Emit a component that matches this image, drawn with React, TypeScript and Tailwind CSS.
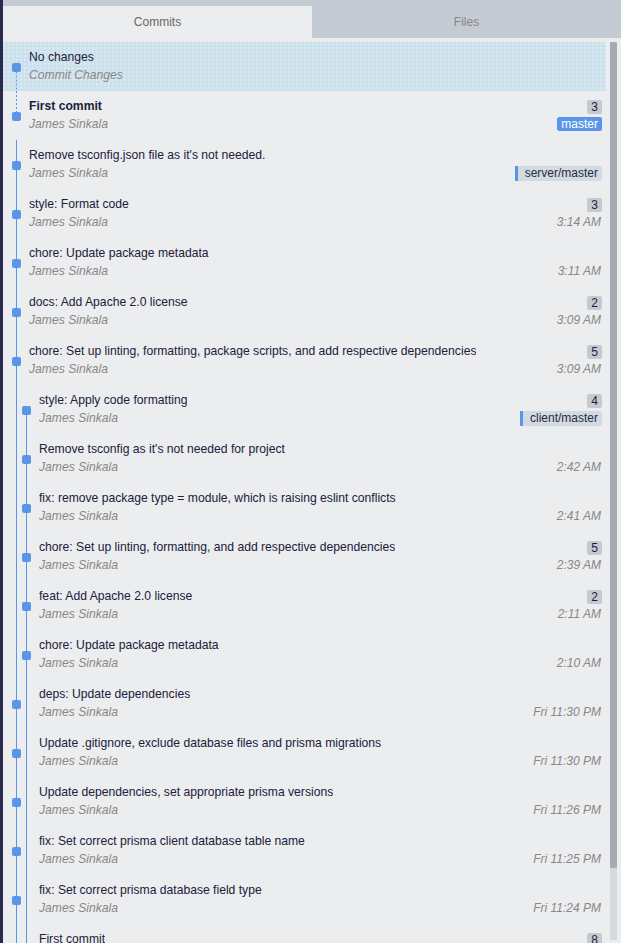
import React from 'react';

type Seg = { lane: number; from: 'top' | 'dot'; to: 'bottom' | 'dot'; dashed?: boolean };

interface Commit {
  title: string;
  author: string;
  lanes: number;
  dot: number;
  segs: Seg[];
  count?: number;
  time?: string;
  branch?: { name: string; kind: 'local' | 'remote' };
  bold?: boolean;
  selected?: boolean;
}

const full = (lane: number): Seg => ({ lane, from: 'top', to: 'bottom' });

const commits: Commit[] = [
  { title: 'No changes', author: 'Commit Changes', lanes: 1, dot: 0, segs: [{ lane: 0, from: 'dot', to: 'bottom', dashed: true }], selected: true },
  { title: 'First commit', author: 'James Sinkala', lanes: 1, dot: 0, segs: [{ lane: 0, from: 'top', to: 'dot', dashed: true }], count: 3, branch: { name: 'master', kind: 'local' }, bold: true },
  { title: "Remove tsconfig.json file as it's not needed.", author: 'James Sinkala', lanes: 1, dot: 0, segs: [full(0)], branch: { name: 'server/master', kind: 'remote' } },
  { title: 'style: Format code', author: 'James Sinkala', lanes: 1, dot: 0, segs: [full(0)], count: 3, time: '3:14 AM' },
  { title: 'chore: Update package metadata', author: 'James Sinkala', lanes: 1, dot: 0, segs: [full(0)], time: '3:11 AM' },
  { title: 'docs: Add Apache 2.0 license', author: 'James Sinkala', lanes: 1, dot: 0, segs: [full(0)], count: 2, time: '3:09 AM' },
  { title: 'chore: Set up linting, formatting, package scripts, and add respective dependencies', author: 'James Sinkala', lanes: 1, dot: 0, segs: [full(0)], count: 5, time: '3:09 AM' },
  { title: 'style: Apply code formatting', author: 'James Sinkala', lanes: 2, dot: 1, segs: [full(0), { lane: 1, from: 'dot', to: 'bottom' }], count: 4, branch: { name: 'client/master', kind: 'remote' } },
  { title: "Remove tsconfig as it's not needed for project", author: 'James Sinkala', lanes: 2, dot: 1, segs: [full(0), full(1)], time: '2:42 AM' },
  { title: 'fix: remove package type = module, which is raising eslint conflicts', author: 'James Sinkala', lanes: 2, dot: 1, segs: [full(0), full(1)], time: '2:41 AM' },
  { title: 'chore: Set up linting, formatting, and add respective dependencies', author: 'James Sinkala', lanes: 2, dot: 1, segs: [full(0), full(1)], count: 5, time: '2:39 AM' },
  { title: 'feat: Add Apache 2.0 license', author: 'James Sinkala', lanes: 2, dot: 1, segs: [full(0), full(1)], count: 2, time: '2:11 AM' },
  { title: 'chore: Update package metadata', author: 'James Sinkala', lanes: 2, dot: 1, segs: [full(0), full(1)], time: '2:10 AM' },
  { title: 'deps: Update dependencies', author: 'James Sinkala', lanes: 2, dot: 0, segs: [full(0), full(1)], time: 'Fri 11:30 PM' },
  { title: 'Update .gitignore, exclude database files and prisma migrations', author: 'James Sinkala', lanes: 2, dot: 0, segs: [full(0), full(1)], time: 'Fri 11:30 PM' },
  { title: 'Update dependencies, set appropriate prisma versions', author: 'James Sinkala', lanes: 2, dot: 0, segs: [full(0), full(1)], time: 'Fri 11:26 PM' },
  { title: 'fix: Set correct prisma client database table name', author: 'James Sinkala', lanes: 2, dot: 0, segs: [full(0), full(1)], time: 'Fri 11:25 PM' },
  { title: 'fix: Set correct prisma database field type', author: 'James Sinkala', lanes: 2, dot: 0, segs: [full(0), full(1)], time: 'Fri 11:24 PM' },
  { title: 'First commit', author: 'James Sinkala', lanes: 2, dot: 0, segs: [{ lane: 0, from: 'top', to: 'dot' }, full(1)], count: 8 },
];

const BLUE = '#5b95e9';
const ROW_H = 49;
const DOT_Y = 21;

// commit graph lanes + node for a single row
function Graph({ c }: { c: Commit }) {
  const width = c.lanes === 1 ? 26 : 36;
  const laneX = (l: number) => 13.5 + l * 10;
  return (
    <svg width={width} height={ROW_H} className="shrink-0 block">
      {c.segs.map((s, i) => {
        const y1 = s.from === 'top' ? 0 : DOT_Y + 4.5;
        const y2 = s.to === 'bottom' ? ROW_H : DOT_Y + 4.5;
        return (
          <line
            key={i}
            x1={laneX(s.lane)}
            x2={laneX(s.lane)}
            y1={y1}
            y2={y2}
            stroke={BLUE}
            strokeWidth={1}
            strokeDasharray={s.dashed ? '2 2' : undefined}
          />
        );
      })}
      <rect x={laneX(c.dot) - 4.5} y={DOT_Y} width={9} height={9} rx={2} fill={BLUE} />
    </svg>
  );
}

function CommitRow({ c }: { c: Commit }) {
  return (
    <div
      className={`flex h-[49px] pr-[4px] ${
        c.selected
          ? 'bg-[#cde1ed] bg-[radial-gradient(circle,rgba(255,255,255,0.55)_0.6px,transparent_0.8px)] bg-[length:4px_4px]'
          : ''
      }`}
    >
      <Graph c={c} />
      <div className="flex-1 min-w-0 pt-[7px]">
        <div className="flex items-center justify-between h-[17px] gap-2">
          <span className={`truncate text-[12.15px] text-[#20203a] ${c.bold ? 'font-bold' : ''}`}>{c.title}</span>
          {c.count !== undefined && (
            <span className="shrink-0 h-[14px] leading-[14px] px-[4px] rounded-[2px] bg-[#c5cad1] text-[12px] text-[#1e1e36]">
              {c.count}
            </span>
          )}
        </div>
        <div className="flex items-center justify-between h-[18px] gap-2">
          <span className="truncate text-[12.15px] italic text-[#8a8784]">{c.author}</span>
          {c.time && <span className="shrink-0 text-[12px] italic text-[#8a8784] pr-[1px]">{c.time}</span>}
          {c.branch && c.branch.kind === 'local' && (
            <span className="shrink-0 h-[14px] leading-[14px] px-[4px] rounded-[2px] bg-[#5b95e9] text-[12px] text-white">
              {c.branch.name}
            </span>
          )}
          {c.branch && c.branch.kind === 'remote' && (
            <span className="shrink-0 h-[15px] leading-[15px] pl-[7px] pr-[4px] rounded-r-[2px] border-l-[3px] border-[#5b95e9] bg-[#d3dbe2] text-[12px] text-[#2a2a3a]">
              {c.branch.name}
            </span>
          )}
        </div>
      </div>
    </div>
  );
}

export default function App() {
  return (
    <div className="flex h-[943px] w-[621px] overflow-hidden bg-[#ebedef] font-['Liberation_Sans',Arial,sans-serif]">
      {/* left window edge */}
      <div className="w-[3px] shrink-0 bg-[#2a2a4e]" />

      <div className="flex flex-1 flex-col min-w-0">
        {/* Tabs */}
        <div className="flex bg-[#c4cbd2] pt-[6px]">
          <div className="flex-1 h-[32px] flex items-center justify-center bg-[#ebedef] text-[12px] text-[#6a6660]">
            Commits
          </div>
          <div className="flex-1 h-[32px] flex items-center justify-center text-[12px] text-[#8a8680]">Files</div>
        </div>

        {/* Commit list + scrollbar */}
        <div className="flex flex-1 min-h-0 pt-[4px]">
          <div className="flex-1 min-w-0 flex flex-col">
            {commits.map((c, i) => (
              <CommitRow key={i} c={c} />
            ))}
          </div>
          <div className="w-[15px] shrink-0 pl-[4px] pr-[4px] flex flex-col">
            <div className="h-[826px] w-[7px] rounded-[1px] bg-[#a4abb3]" />
            <div className="h-[72px] w-[7px] bg-[#d5d9dd]" />
          </div>
        </div>
      </div>
    </div>
  );
}
